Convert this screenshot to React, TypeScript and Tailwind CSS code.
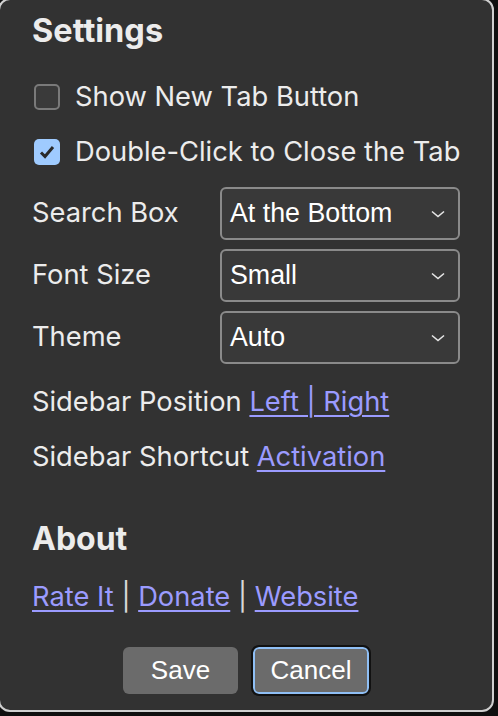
import React from "react";

const ui = { fontFamily: "Inter, 'Noto Sans', sans-serif" };
const native = { fontFamily: "'Liberation Sans', Arial, sans-serif" };

function Chevron() {
  return (
    <svg width="14" height="8" viewBox="0 0 14 8" className="shrink-0">
      <polyline points="1,1.5 7,6.5 13,1.5" fill="none" stroke="#e6e6e6" strokeWidth="1.6" />
    </svg>
  );
}

function Checkbox({ checked }: { checked?: boolean }) {
  if (checked) {
    return (
      <div className="w-[26px] h-[26px] rounded-[5px] bg-[#9fcbff] flex items-center justify-center shrink-0">
        <svg width="16" height="14" viewBox="0 0 16 14">
          <polyline points="2,7.5 6,11.5 14,2" fill="none" stroke="#2a2a2a" strokeWidth="3" />
        </svg>
      </div>
    );
  }
  return <div className="w-[26px] h-[26px] rounded-[5px] border-2 border-[#7a7a7a] bg-[#3a3a3a] shrink-0" />;
}

function SelectRow({ label, value }: { label: string; value: string }) {
  return (
    <div className="flex items-center h-[53px]">
      <span className="w-[188px] text-[27.3px]" style={ui}>{label}</span>
      <div className="w-[240px] h-[53px] rounded-[6px] border-2 border-[#8a8a8a] bg-[#393939] flex items-center justify-between pl-[8px] pr-[13px]">
        <span className="text-[26.8px] text-white" style={native}>{value}</span>
        <Chevron />
      </div>
    </div>
  );
}

const link = "text-[#9b9bff] underline underline-offset-[4px] decoration-[2px]";

export default function App() {
  return (
    <div className="w-[498px] h-[716px] bg-[#0f0f0f] overflow-hidden">
      <div
        className="-ml-[2px] -mt-[2px] w-[496px] h-[714px] border-2 border-[#cfcfcf] rounded-[12px] bg-[#323232] text-[#ececec] pl-[32px] pt-[11px]"
        style={ui}
      >
        <h2 className="text-[32.5px] font-bold leading-[40px]">Settings</h2>

        <label className="flex items-center gap-[15px] h-[40px] mt-[26px] ml-[2px] text-[27.3px]">
          <Checkbox />
          Show New Tab Button
        </label>
        <label className="flex items-center gap-[15px] h-[40px] mt-[15px] ml-[2px] text-[27.3px]">
          <Checkbox checked />
          Double-Click to Close the Tab
        </label>

        <div className="flex flex-col gap-[9px] mt-[15px]">
          <SelectRow label="Search Box" value="At the Bottom" />
          <SelectRow label="Font Size" value="Small" />
          <SelectRow label="Theme" value="Auto" />
        </div>

        <div className="h-[40px] leading-[40px] mt-[18px] text-[27.3px]">
          Sidebar Position <a className={link}>Left | Right</a>
        </div>
        <div className="h-[40px] leading-[40px] mt-[15px] text-[27.3px]">
          Sidebar Shortcut <a className={link}>Activation</a>
        </div>

        <h2 className="text-[32px] font-bold leading-[40px] mt-[42px]">About</h2>
        <div className="h-[40px] leading-[40px] mt-[18px] text-[27.3px]">
          <a className={link}>Rate It</a> <span className="text-[#d8d8d8]">|</span> <a className={link}>Donate</a>{" "}
          <span className="text-[#d8d8d8]">|</span> <a className={link}>Website</a>
        </div>

        <div className="flex justify-center gap-[15px] mt-[30px] -ml-[32px]" style={native}>
          <button className="w-[115px] h-[47px] rounded-[6px] bg-[#6b6b6b] text-white text-[26px]">Save</button>
          <button className="w-[116px] h-[47px] rounded-[6px] bg-[#6b6b6b] text-white text-[26px] border-2 border-[#8fbff5] outline-2 outline-[#111]">
            Cancel
          </button>
        </div>
      </div>
    </div>
  );
}
